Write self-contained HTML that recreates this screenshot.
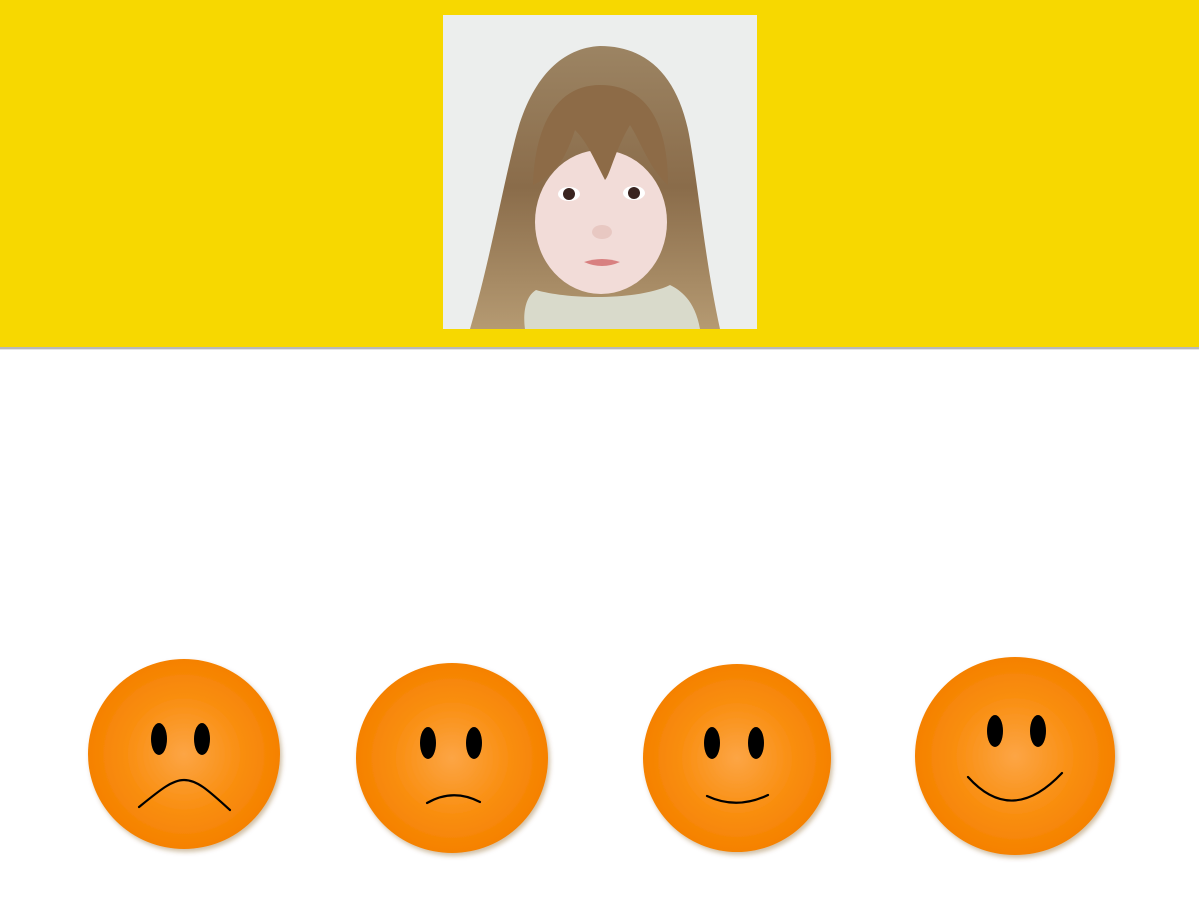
<!DOCTYPE html>
<html><head><meta charset="utf-8"><style>
html,body{margin:0;padding:0;background:#fff;width:1199px;height:900px;overflow:hidden}
svg{display:block}
</style></head><body>
<svg width="1199" height="900" viewBox="0 0 1199 900" xmlns="http://www.w3.org/2000/svg">
<defs>
<radialGradient id="og" cx="50%" cy="50%" r="50%">
<stop offset="0" stop-color="#fca545"/>
<stop offset="0.6" stop-color="#f98e10"/>
<stop offset="1" stop-color="#f58100"/>
</radialGradient>
<filter id="sh" x="-10%" y="-10%" width="125%" height="125%">
<feDropShadow dx="2" dy="3" stdDeviation="2.5" flood-color="#7a4a10" flood-opacity="0.35"/>
</filter>
<linearGradient id="hair" x1="0" y1="0" x2="0" y2="1">
<stop offset="0" stop-color="#9c8463"/>
<stop offset="0.5" stop-color="#8a6c4a"/>
<stop offset="1" stop-color="#b59a72"/>
</linearGradient>
</defs>
<rect x="0" y="0" width="1199" height="347" fill="#f7d800"/>
<rect x="0" y="347" width="1199" height="2" fill="#b8b8b8"/>
<rect x="0" y="349" width="1199" height="1" fill="#e4e4e4"/>
<!-- photo -->
<rect x="443" y="15" width="314" height="314" fill="#eceeed"/>
<path d="M470 329 C490 260 500 200 515 140 C530 80 560 48 600 46 C650 46 680 80 690 140 C700 200 705 260 720 329 Z" fill="url(#hair)"/>
<path d="M536 290 C520 300 525 329 525 329 L700 329 C695 300 680 290 670 285 C640 300 570 300 536 290Z" fill="#d9dacb"/>
<ellipse cx="601" cy="222" rx="66" ry="72" fill="#f2dcd8"/>
<path d="M533 185 C535 120 560 85 600 85 C645 85 668 120 668 185 C650 170 640 140 630 125 C615 150 610 175 605 180 C590 150 585 140 575 130 C565 160 555 175 533 185Z" fill="#8d6b47"/>
<ellipse cx="569" cy="194" rx="11" ry="7" fill="#fff"/>
<ellipse cx="634" cy="193" rx="11" ry="7" fill="#fff"/>
<circle cx="569" cy="194" r="6" fill="#3a2420"/>
<circle cx="634" cy="193" r="6" fill="#3a2420"/>
<ellipse cx="602" cy="232" rx="10" ry="7" fill="#e8c8c2"/>
<path d="M584 262 Q602 256 620 262 Q602 270 584 262Z" fill="#d88080"/>
<!-- faces -->
<g filter="url(#sh)">
<ellipse cx="184" cy="754" rx="96" ry="95" fill="url(#og)"/>
<ellipse cx="452" cy="758" rx="96" ry="95" fill="url(#og)"/>
<ellipse cx="737" cy="758" rx="94" ry="94" fill="url(#og)"/>
<ellipse cx="1015" cy="756" rx="100" ry="99" fill="url(#og)"/>
</g>
<g fill="#000">
<ellipse cx="159" cy="739" rx="8" ry="16"/><ellipse cx="202" cy="739" rx="8" ry="16"/>
<ellipse cx="428" cy="743" rx="8" ry="16"/><ellipse cx="474" cy="743" rx="8" ry="16"/>
<ellipse cx="712" cy="743" rx="8" ry="16"/><ellipse cx="756" cy="743" rx="8" ry="16"/>
<ellipse cx="995" cy="731" rx="8" ry="16"/><ellipse cx="1038" cy="731" rx="8" ry="16"/>
</g>
<g fill="none" stroke="#000" stroke-width="2.2" stroke-linecap="round">
<path d="M139 807 C160 790 172 780 184 780 C198 780 210 792 230 810"/>
<path d="M427 803 Q453 788 480 802"/>
<path d="M707 796 Q737 810 768 795"/>
<path d="M968 777 Q1012 826 1062 773"/>
</g>
</svg>
</body></html>
